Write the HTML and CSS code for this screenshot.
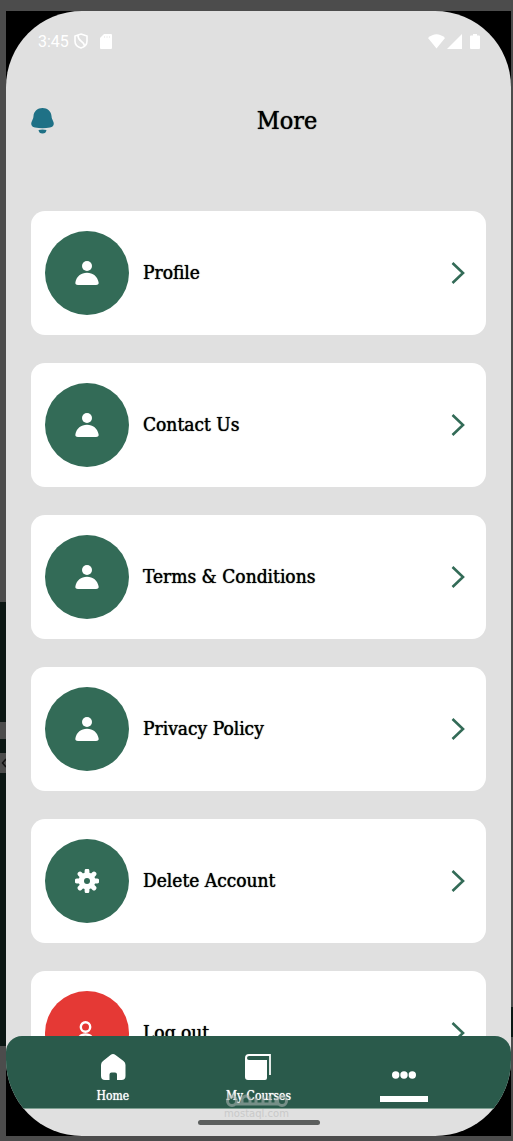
FILE: index.html
```html
<!DOCTYPE html>
<html lang="en">
<head>
<meta charset="utf-8">
<meta name="viewport" content="width=device-width, initial-scale=1">
<title>More</title>
<link rel="stylesheet" href="styles.css">
</head>
<body>
<svg class="sprite" aria-hidden="true">
  <symbol id="person" viewBox="0 0 24 24"><circle cx="12" cy="5" r="5"/><path d="M3 24C1 24 0 23 .4 21.300C1.500 15.500 6 11.800 12 11.800S22.500 15.500 23.600 21.300C24 23 23 24 21 24Z"/></symbol>
  <symbol id="chevron" viewBox="0 0 14 24"><path d="M1.500 2L12 12L1.500 22" fill="none" stroke="currentColor" stroke-width="2.600"/></symbol>
</svg>
<div class="desktop">
  <div class="backdrop backdrop-left" aria-hidden="true"><span class="strip"></span><span class="strip strip-tall"><svg viewBox="0 0 6 20"><path d="M6 6L2.500 10L6 14" fill="none" stroke="#111" stroke-width="1.500"/></svg></span></div>
  <div class="device">
    <div class="screen">
      <div class="status">
        <span class="time">3:45</span>
        <svg class="shield" viewBox="0 0 14 16"><path d="M7 1L13 3V8C13 11.500 10.500 14 7 15C3.500 14 1 11.500 1 8V3ZM4 2.500Q4 6 7 8T10.500 13" fill="none" stroke="#fff" stroke-width="1.600"/></svg>
        <svg class="card-icon" viewBox="0 0 12 15"><path d="M4 0H11Q12 0 12 1V14Q12 15 11 15H1Q0 15 0 14V4Z" fill="#fff"/><path d="M4.500 2V4M7 2V4M9.500 2V4" stroke="#f0f0f0"/></svg>
        <span class="signals">
          <svg width="17" height="15" viewBox="0 0 17 15"><path d="M0 4Q8.500 -3.500 17 4L8.500 14.500Z" fill="#fff"/></svg>
          <svg width="15" height="15" viewBox="0 0 15 15"><path d="M15 0V15H0Z" fill="#fff"/></svg>
          <svg class="battery" width="10" height="15" viewBox="0 0 10 15"><path d="M3 0H7V1.500H9Q10 1.500 10 2.500V14Q10 15 9 15H1Q0 15 0 14V2.500Q0 1.500 1 1.500H3Z" fill="#fff"/></svg>
        </span>
      </div>
      <header class="header">
        <button class="bell" aria-label="Notifications"><svg viewBox="0 0 23 26"><path d="M11.500 0C6.500 0 2.800 3.300 2.500 8Q2.500 10.500 1.200 12.500C-.8 16 .3 19 4 19.500Q11.500 21 19 19.500C22.700 19 23.800 16 21.800 12.500Q20.500 10.500 20.500 8C20.200 3.300 16.500 0 11.500 0Z"/><path d="M7.500 22Q11.500 21.200 15.500 22Q15 25.500 11.500 25.500T7.500 22Z"/></svg></button>
        <h1 class="title">More</h1>
      </header>
      <main class="content">
        <ul class="menu">
          <li><a class="item" href="#profile"><span class="disc"><svg><use href="#person"/></svg></span><span class="label">Profile</span><svg class="chevron"><use href="#chevron"/></svg></a></li>
          <li><a class="item" href="#contact"><span class="disc"><svg><use href="#person"/></svg></span><span class="label">Contact Us</span><svg class="chevron"><use href="#chevron"/></svg></a></li>
          <li><a class="item" href="#terms"><span class="disc"><svg><use href="#person"/></svg></span><span class="label">Terms &amp; Conditions</span><svg class="chevron"><use href="#chevron"/></svg></a></li>
          <li><a class="item" href="#privacy"><span class="disc"><svg><use href="#person"/></svg></span><span class="label">Privacy Policy</span><svg class="chevron"><use href="#chevron"/></svg></a></li>
          <li><a class="item" href="#delete"><span class="disc"><svg viewBox="-12 -12 24 24"><path d="M0-10V10M-10 0H10M-7-7L7 7M-7 7L7-7" stroke="#fff" stroke-width="4.800" stroke-linecap="round"/><circle r="8.400"/><circle r="3" fill="#336b57"/></svg></span><span class="label">Delete Account</span><svg class="chevron"><use href="#chevron"/></svg></a></li>
          <li><a class="item" href="#logout"><span class="disc disc-danger"><svg viewBox="0 0 24 24"><g fill="none" stroke="#fff" stroke-width="2.400"><circle cx="10.500" cy="6" r="4.700"/><path d="M3 22C3 16 6 13.500 10.500 13.500S18 16 18 22Z"/></g></svg></span><span class="label">Log out</span><svg class="chevron"><use href="#chevron"/></svg></a></li>
        </ul>
      </main>
      <nav class="tabs">
        <a class="tab" href="#home"><svg width="26" height="26" viewBox="0 0 26 26"><path d="M10.500 1Q13 -.8 15.500 1L23.500 7Q25.500 8.600 25.500 11V22Q25.500 26 21.500 26H17V20.500Q17 18.500 15 18.500H11.500Q9.500 18.500 9.500 20.500V26H5Q1 26 1 22V11Q1 8.600 3 7Z" fill="#fff"/></svg><span>Home</span></a>
        <a class="tab" href="#courses"><svg width="26" height="26" viewBox="0 0 26 26"><path d="M4 1H25V21" fill="none" stroke="#e4ebe8" stroke-width="2"/><path d="M4 0Q0 0 0 4V23Q0 26 3 26H20Q22 26 22 24V6H4Q2 6 2 4T4 2H25V0Z" fill="#fff"/></svg><span>My Courses</span></a>
        <a class="tab tab-active" href="#more" aria-label="More" aria-current="page"><svg width="24" height="8" viewBox="0 0 24 8"><g fill="#fff"><circle cx="3.700" cy="4" r="3.700"/><circle cx="12" cy="4" r="3.700"/><circle cx="20.300" cy="4" r="3.700"/></g></svg><span class="indicator"></span></a>
      </nav>
      <footer class="gesture"><span class="handle"></span></footer>
      <div class="watermark"><svg width="62" height="18" viewBox="0 0 62 18"><g fill="none" stroke="#a9b3af" stroke-width="3"><circle cx="6" cy="11" r="4.500"/><circle cx="56" cy="11" r="4.500"/><path d="M10 14H52"/><path d="M16 13V9Q20 3 24 9V13M30 13V8M37 13V7M44 13V6M50 13V8"/></g></svg><span>mostaql.com</span></div>
    </div>
  </div>
  <div class="backdrop backdrop-right" aria-hidden="true"></div>
</div>
</body>
</html>
```
FILE: styles.css
```css
* { box-sizing: border-box; }
body { margin: 0; background: #4c4c4c; font-family: "DejaVu Serif Condensed", "DejaVu Serif", serif; color: #000; }
a { color: inherit; text-decoration: none; }
svg { display: block; flex: none; }
.sprite { display: none; }
.desktop { display: grid; grid-template-columns: 6px minmax(0, 1fr) 2px; grid-template-rows: minmax(0, 1fr); height: 100vh; }
.backdrop-left { margin: 602px 0 95px; padding-top: 120px; background: #0c1714; }
.backdrop-right { margin: 1007px 0 104px; background: #0c1714; }
.strip { display: block; height: 17px; margin-bottom: 14px; background: #4c4c4c; }
.strip-tall { height: 20px; }
.device { min-width: 0; padding: 11px 0 5px; background: linear-gradient(#000, #000) content-box; }
.screen { position: relative; display: flex; flex-direction: column; height: 100%; overflow: hidden; border-radius: 76px; background: #e0e0e0; }

.status { display: flex; align-items: center; flex: none; height: 60px; padding: 0 31px 0 32px; color: #fff; font-family: Roboto, sans-serif; font-size: 16px; }
.shield { width: 14px; height: 16px; margin-left: 5px; }
.card-icon { width: 12px; height: 15px; margin-left: 12px; }
.signals { display: flex; gap: 2px; margin-left: auto; }
.battery { margin-left: 6px; }

.header { display: flex; align-items: center; flex: none; height: 100px; padding: 0 25px; }
.bell { width: 57px; padding: 0; border: 0; background: none; }
.bell svg { width: 23px; height: 26px; fill: #1f7186; }
.title { flex: 1; margin: 0; font-size: 25px; line-height: 32px; font-weight: 400; text-align: center; text-shadow: 0 0 1px #000; }

.content { flex: 1; min-height: 0; overflow: hidden; padding: 40px 25px 0; }
.menu { display: grid; gap: 28px; margin: 0; padding: 0; list-style: none; }
.item { display: flex; align-items: center; height: 124px; padding: 0 21px 0 14px; border-radius: 14px; background: #fff; }
.disc { display: grid; place-items: center; flex: none; width: 84px; height: 84px; border-radius: 50%; background: #336b57; }
.disc svg { width: 24px; height: 24px; fill: #fff; }
.disc-danger { background: #e53935; }
.label { flex: 1; padding-bottom: 2px; margin-left: 14px; font-size: 19px; line-height: 24px; text-shadow: 0 0 1px #000; }
.chevron { width: 14px; height: 24px; color: #336b57; }

.tabs { position: relative; display: grid; grid-template-columns: repeat(3, 1fr); flex: none; height: 73px; padding: 0 34px; border-radius: 16px 16px 0 0; border-bottom: 1px solid #7fa092; background: #2a5a4b; color: #fff; font-size: 12px; line-height: 16px; text-shadow: 0 0 1px #fff; }
.tab { display: flex; flex-direction: column; align-items: center; gap: 8px; padding-top: 18px; white-space: nowrap; }
.tab-active { gap: 17px; padding-top: 35px; }
.indicator { width: 48px; height: 6px; background: #fff; }
.gesture { display: flex; justify-content: center; flex: none; height: 27px; padding-top: 11px; }
.handle { width: 122px; height: 5px; border-radius: 3px; background: #5c5f5e; }
.watermark { position: absolute; bottom: 16px; left: 0; right: 4px; display: flex; flex-direction: column; align-items: center; color: #c9c9c9; font: 10px/12px "DejaVu Sans", sans-serif; pointer-events: none; }
.watermark svg { opacity: .6; }
```
